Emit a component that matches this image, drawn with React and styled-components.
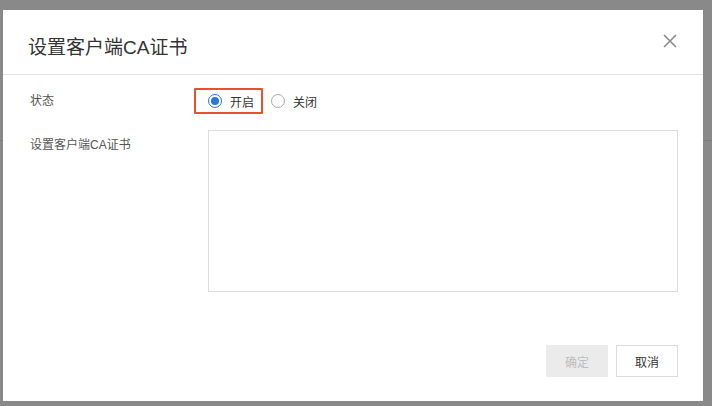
import React, { useState } from "react";
import styled, { createGlobalStyle } from "styled-components";

const Global = createGlobalStyle`
  html, body { margin: 0; padding: 0; }
  body {
    font-family: "Liberation Sans", "Noto Sans CJK SC", sans-serif;
    background: #898989;
  }
`;

const Backdrop = styled.div`
  width: 712px;
  height: 406px;
  box-sizing: border-box;
  padding: 10px 0 0 3px;
  background:
    linear-gradient(to bottom, transparent 140px, #7e7e7e 140px, #7e7e7e 141px, transparent 141px),
    #898989;
  overflow: hidden;
`;

const Dialog = styled.div`
  width: 700px;
  height: 391px;
  background: #fff;
  display: flex;
  flex-direction: column;
`;

const Header = styled.div`
  height: 65px;
  box-sizing: border-box;
  border-bottom: 1px solid #e3e3e3;
  display: flex;
  align-items: center;
  justify-content: space-between;
  padding: 0 26px 0 25px;
`;

const Title = styled.h2`
  margin: 0;
  margin-top: 6px;
  font-size: 19px;
  font-weight: normal;
  color: #333;
`;

const CloseButton = styled.button`
  border: none;
  background: none;
  padding: 0;
  width: 14px;
  height: 14px;
  margin-top: -2px;
  display: flex;
  cursor: pointer;
`;

const Body = styled.div`
  flex: 1;
  padding: 13px 25px 0 27px;
  display: flex;
  flex-direction: column;
  gap: 16px;
`;

const Row = styled.div`
  display: flex;
  align-items: ${(p) => (p.$top ? "flex-start" : "center")};
`;

const Label = styled.div`
  width: 178px;
  flex: none;
  font-size: 12px;
  color: #555;
  line-height: ${(p) => (p.$tall ? "30px" : "26px")};
`;

const RadioGroup = styled.div`
  position: relative;
  display: flex;
  align-items: center;
  height: 26px;
  gap: 17px;
`;

const Highlight = styled.span`
  position: absolute;
  left: -14px;
  top: 0;
  width: 69px;
  height: 26px;
  box-sizing: border-box;
  border: 2px solid #e8512f;
  border-radius: 1px;
  pointer-events: none;
`;

const RadioItem = styled.label`
  display: flex;
  align-items: center;
  gap: 8px;
  font-size: 12px;
  color: #333;
  cursor: pointer;
`;

const RadioCircle = styled.span`
  width: 14px;
  height: 14px;
  box-sizing: border-box;
  border-radius: 50%;
  border: 1px solid ${(p) => (p.$checked ? "#2b74d8" : "#a9a9a9")};
  display: flex;
  align-items: center;
  justify-content: center;
  background: #fff;
  &::after {
    content: "";
    width: 8px;
    height: 8px;
    border-radius: 50%;
    background: ${(p) => (p.$checked ? "#2b74d8" : "transparent")};
  }
`;

const TextArea = styled.textarea`
  width: 470px;
  height: 162px;
  box-sizing: border-box;
  border: 1px solid #dcdcdc;
  resize: none;
  outline: none;
  font-family: inherit;
  font-size: 12px;
  padding: 6px 8px;
  margin: 0;
`;

const Footer = styled.div`
  display: flex;
  justify-content: flex-end;
  gap: 8px;
  padding: 0 25px 24px 0;
`;

const Button = styled.button`
  width: 62px;
  height: 32px;
  box-sizing: border-box;
  font-family: inherit;
  font-size: 12px;
  border: 1px solid ${(p) => (p.$disabled ? "#ebebeb" : "#dcdcdc")};
  background: ${(p) => (p.$disabled ? "#ebebeb" : "#fff")};
  color: ${(p) => (p.$disabled ? "#bdbdbd" : "#333")};
  cursor: ${(p) => (p.$disabled ? "not-allowed" : "pointer")};
  padding: 0;
`;

export default function App() {
  const [on, setOn] = useState(true);
  return (
    <>
      <Global />
      <Backdrop>
        <Dialog>
          <Header>
            <Title>设置客户端CA证书</Title>
            <CloseButton aria-label="close">
              <svg width="14" height="14" viewBox="0 0 14 14">
                <path d="M1 1 L13 13 M13 1 L1 13" stroke="#8a8a8a" strokeWidth="1.6" />
              </svg>
            </CloseButton>
          </Header>
          <Body>
            <Row>
              <Label>状态</Label>
              <RadioGroup>
                <Highlight />
                <RadioItem onClick={() => setOn(true)}>
                  <RadioCircle $checked={on} />
                  开启
                </RadioItem>
                <RadioItem onClick={() => setOn(false)}>
                  <RadioCircle $checked={!on} />
                  关闭
                </RadioItem>
              </RadioGroup>
            </Row>
            <Row $top>
              <Label $tall>设置客户端CA证书</Label>
              <TextArea />
            </Row>
          </Body>
          <Footer>
            <Button $disabled>确定</Button>
            <Button>取消</Button>
          </Footer>
        </Dialog>
      </Backdrop>
    </>
  );
}
